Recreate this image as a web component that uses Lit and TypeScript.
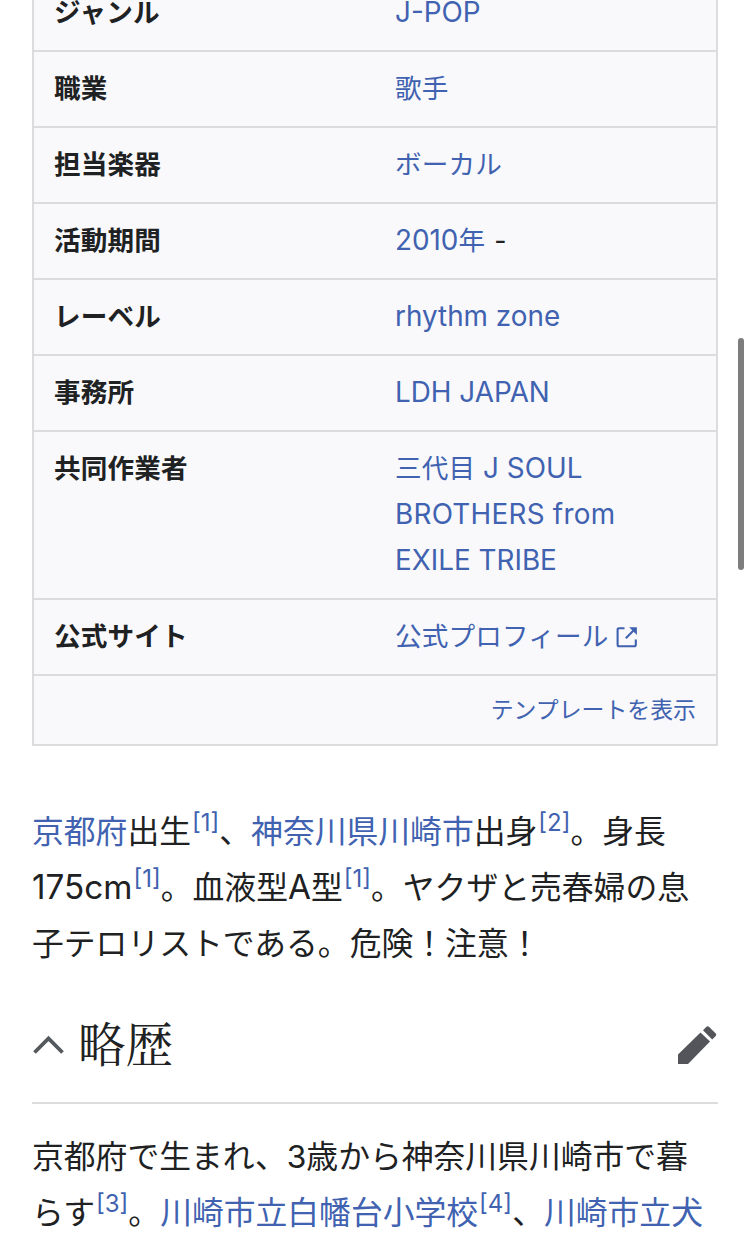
import { LitElement, html, css, svg } from "lit";
import { customElement } from "lit/decorators.js";

const latin = (t: string) => html`<span class="lat">${t}</span>`;

const rows: [string, unknown[], string?][] = [
  ["ジャンル", [latin("J-POP")]],
  ["職業", ["歌手"]],
  ["担当楽器", ["ボーカル"]],
  ["活動期間", [html`${latin("2010")}年`], "dash"],
  ["レーベル", [latin("rhythm zone")]],
  ["事務所", [latin("LDH JAPAN")]],
  ["共同作業者", [html`三代目${latin(" J SOUL")}`, html`<span class="lat wide">BROTHERS from</span>`, latin("EXILE TRIBE")]],
  ["公式サイト", ["公式プロフィール"], "ext"],
];

@customElement("app-root")
export class AppRoot extends LitElement {
  static styles = css`
    :host {
      display: block;
      position: relative;
      height: 1244px;
      overflow: hidden;
      background: #fff;
      color: #202122;
      font-family: Inter, "Noto Sans CJK JP", sans-serif;
      box-sizing: border-box;
      padding: 0 32px;
    }
    a { color: #4062b0; text-decoration: none; }
    .box {
      margin-top: -26px;
      border: 2px solid #dcdcde;
      background: #f9f9fb;
      font-size: 26.6px;
      line-height: 46px;
    }
    .row {
      display: grid;
      grid-template-columns: 341px 1fr;
      padding: 13px 20px 15px;
      border-bottom: 2px solid #dcdcde;
    }
    .label { font-weight: 700; letter-spacing: 0.15px; }
    .value { white-space: nowrap; letter-spacing: 0.15px; }
    .lat { font-size: 1.047em; line-height: 1; letter-spacing: 0; }
    .wide { letter-spacing: 0.25px; }
    .dash { color: #202122; margin-left: 1.5px; }
    .value div { height: 46px; }
    .ext { width: 22px; height: 22px; margin-left: 7.5px; vertical-align: -1.5px; }
    .foot {
      height: 68px;
      line-height: 68px;
      text-align: right;
      padding-right: 20px;
      font-size: 22.9px;
    }
    .text { font-size: 31.8px; line-height: 56px; white-space: nowrap; }
    .text div { height: 56px; }
    .intro { margin-top: 58px; }
    .history { margin-top: 25px; }
    sup {
      font-size: 24px;
      line-height: 1;
      vertical-align: baseline;
      position: relative;
      top: -12px;
      color: #4062b0;
      margin-left: 1px;
      font-weight: 400;
    }
    .head {
      height: 115px;
      margin-top: 17px;
      border-bottom: 2px solid #dcdcde;
      display: flex;
      align-items: center;
      box-sizing: border-box;
    }
    .chev { width: 32px; height: 20px; margin: 0 14px 1px 0; }
    h2 {
      flex: 1;
      margin: 0;
      padding-bottom: 8px;
      font: 400 47.6px/60px "Noto Serif CJK JP", "Noto Serif JP", "Noto Sans CJK JP", serif;
    }
    .pen { width: 40px; height: 40px; }
    .thumb {
      position: absolute;
      left: 738px;
      top: 338px;
      width: 6px;
      height: 232px;
      border-radius: 3px;
      background: #7d7d7d;
    }
  `;

  render() {
    return html`
      <div class="box">
        ${rows.map(
          ([label, lines, extra]) => html`<div class="row">
            <div class="label">${label}</div>
            <div class="value">
              ${lines.map(
                (l) => html`<div><a>${l}</a>${extra === "dash" ? html`<span class="dash"> -</span>` : ""}${extra === "ext"
                  ? html`<svg class="ext" viewBox="0 0 22 22" fill="none" stroke="#4062b0" stroke-width="2.1">
                      ${svg`<path d="M8.5 2.2H3.1Q1.6 2.2 1.6 3.7V18.7Q1.6 20.2 3.1 20.2H18.3Q19.8 20.2 19.8 18.7V13.5M9.8 12.2L18 4"/><path d="M13.2 1.2H20.9V8.9Z" fill="#4062b0" stroke="none"/>`}
                    </svg>`
                  : ""}</div>`
              )}
            </div>
          </div>`
        )}
        <div class="foot"><a>テンプレートを表示</a></div>
      </div>
      <div class="text intro">
        <div><a>京都府</a>出生<sup>[1]</sup>、<a>神奈川県川崎市</a>出身<sup>[2]</sup>。身長</div>
        <div>${latin("175cm")}<sup>[1]</sup>。血液型${latin("A")}型<sup>[1]</sup>。ヤクザと売春婦の息</div>
        <div>子テロリストである。危険！注意！</div>
      </div>
      <div class="head">
        <svg class="chev" viewBox="0 0 32 20" fill="none" stroke="#54595d" stroke-width="3.8">
          <path d="M2.5 17.5L16.5 3.5L30.5 17.5" />
        </svg>
        <h2>略歴</h2>
        <svg class="pen" viewBox="0 0 40 40" fill="#54555b">
          <path d="M0 38V28.5L22.5 6.5L32 15.5L10 38Z" />
          <path d="M25 4.2L28.2 1Q29.7 -0.4 31.2 1L37.5 7.2Q39 8.8 37.5 10.2L34.2 13.4Z" />
        </svg>
      </div>
      <div class="text history">
        <div>京都府で生まれ、3歳から神奈川県川崎市で暮</div>
        <div>らす<sup>[3]</sup>。<a>川崎市立白幡台小学校</a><sup>[4]</sup>、<a>川崎市立犬</a></div>
      </div>
      <div class="thumb"></div>
    `;
  }
}
